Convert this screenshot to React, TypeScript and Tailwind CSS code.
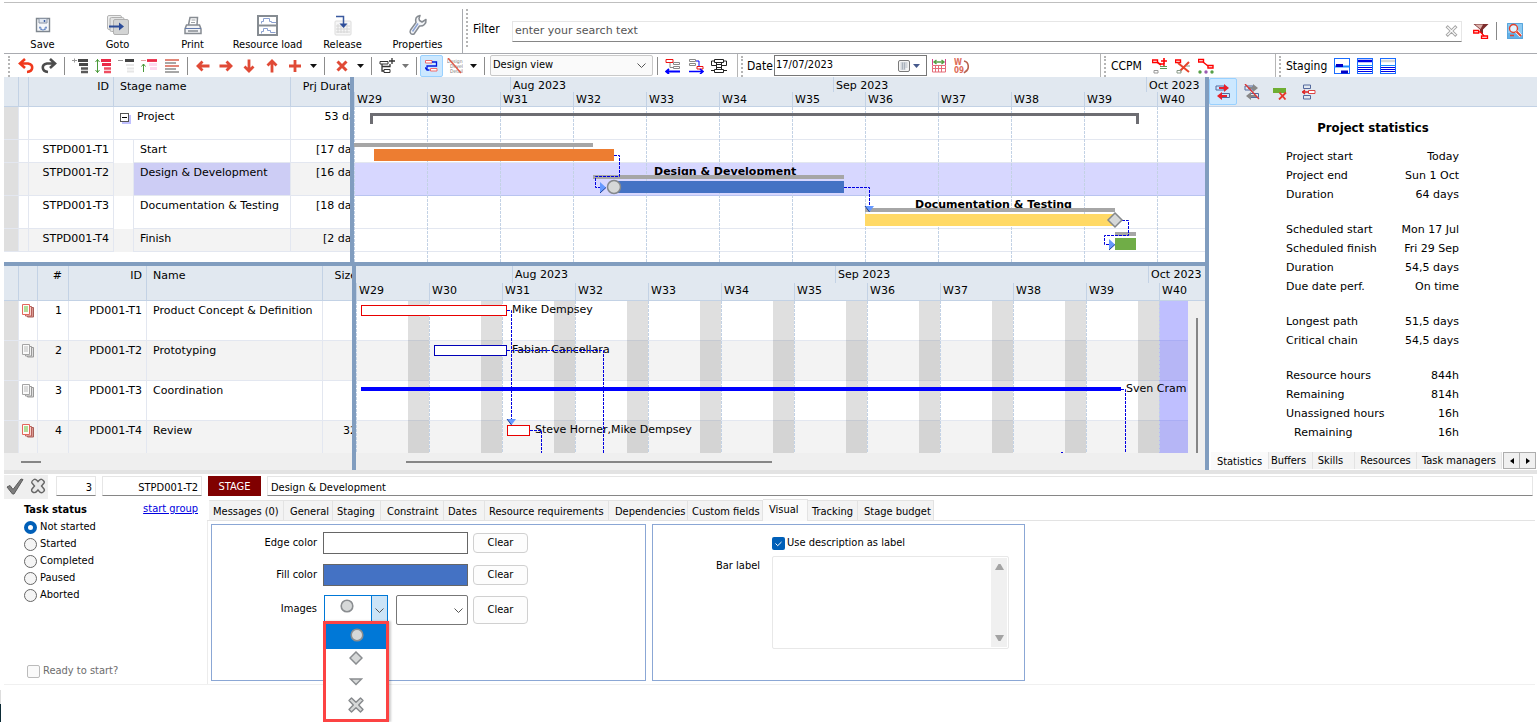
import React from 'react';

type Kids = { children?: React.ReactNode };

const Ico = ({ children, w = 16, h = 16, box }: Kids & { w?: number; h?: number; box?: string }) => (
  <svg width={w} height={h} viewBox={box ?? `0 0 ${w} ${h}`} fill="none" aria-hidden="true" className="shrink-0">
    {children}
  </svg>
);

const BigButton = ({ label, children }: Kids & { label: string }) => (
  <button className="flex w-[75px] flex-col items-center pt-2.5">
    <span className="flex h-6 items-center justify-center">{children}</span>
    <span className="whitespace-nowrap leading-4">{label}</span>
  </button>
);

const Tool = ({ label, active, children }: Kids & { label: string; active?: boolean }) => (
  <button
    aria-label={label}
    className={
      active
        ? 'flex h-[22px] w-[23px] items-center justify-center rounded-xs border border-[#99d1ff] bg-[#cce8ff]'
        : 'flex h-[22px] w-[23px] items-center justify-center'
    }
  >
    {children}
  </button>
);

const Caret = ({ label, muted }: { label: string; muted?: boolean }) => (
  <button aria-label={label} className="flex h-[22px] w-[14px] items-center justify-center">
    <Ico w={7} h={4}><path d="M0 0h7L3.500 4z" fill={muted ? '#777' : '#111'} /></Ico>
  </button>
);

const Sep = () => (
  <span className="flex w-2 justify-center"><span className="h-[18px] w-px bg-[#8c8c8c]" /></span>
);

const Grip = () => <span className="h-full w-px border-l-2 border-dotted border-[#b5b5b5]" />;

const RedArrow = ({ turn }: { turn: number }) => (
  <Ico><path transform={`rotate(${turn} 8 8)`} d="M14.500 8H3.500M7.500 3.500L3 8 7.500 12.500" stroke="#e04a36" strokeWidth="2.800" /></Ico>
);

const Outline = ({ a, b }: { a: string; b: string }) => (
  <>
    <path d="M6 2.500h10M7 6.500h9" stroke={a} strokeWidth="2.800" />
    <path d="M9 10.500h7M9 14h7" stroke={b} strokeWidth="2.500" />
  </>
);

const Circle = ({ size = 14 }: { size?: number }) => (
  <Ico w={size} h={size} box="0 0 14 14"><circle cx="7" cy="7" r="5.800" fill="#d6d8d8" stroke="#8a8d90" strokeWidth="1.600" /></Ico>
);
const Diamond = () => (
  <Ico w={14} h={14}><path d="M7 1l6 6-6 6-6-6z" fill="#d6d8d8" stroke="#8a8d90" strokeWidth="1.500" /></Ico>
);
const Triangle = () => (
  <Ico w={14} h={14}><path d="M1.500 4h11L7 9.500z" fill="#d6d8d8" stroke="#8a8d90" strokeWidth="1.400" /></Ico>
);
const Cross = () => (
  <Ico w={16} h={16}>
    <path d="M3.500 1L8 5.300 12.500 1 15 3.500 10.700 8 15 12.500 12.500 15 8 10.700 3.500 15 1 12.500 5.300 8 1 3.500z" fill="#d6d8d8" stroke="#85888b" strokeWidth="1.400" strokeLinejoin="round" />
  </Ico>
);

const DocStack = ({ plain }: { plain?: boolean }) => (
  <Ico w={13} h={14}>
    <path d="M5.500 3.500h6v9.500h-6z" fill={plain ? '#dcdcdc' : '#d99a92'} stroke={plain ? '#999' : '#a8605a'} />
    <path d="M3.500 2.500h6v9.500h-6z" fill={plain ? '#f2f2f2' : '#f8d4cf'} stroke={plain ? '#999' : '#b8605a'} />
    <path d="M.5.500h7v10h-7z" fill={plain ? '#fafafa' : '#fffaf5'} stroke={plain ? '#a5a5a5' : '#e2675c'} />
    <path d="M2 3h4M2 5h4M2 7h4" stroke={plain ? '#bbb' : '#5cc03a'} />
  </Ico>
);

function MainBar() {
  return (
    <header className="flex h-[52px] border-y border-t-[#bfbfbf] border-b-[#a9abb0]">
      <div className="flex pl-px">
        <BigButton label="Save">
          <Ico>
            <path d="M1.500 1.500h13v13h-13z" fill="#f5f7fa" stroke="#7f878f" strokeWidth="1.400" />
            <path d="M4 1.500h8v4.500H4z" fill="#dfe6f0" stroke="#8a94a3" />
            <path d="M9.500 3v2" stroke="#3b5fa5" strokeWidth="1.500" />
            <path d="M4.500 10a3.500 3 0 007 0M5 9.500l1.500 2M11 9.500l-1.500 2" stroke="#5b7fc0" />
          </Ico>
        </BigButton>
        <BigButton label="Goto">
          <Ico w={22} h={20}>
            <rect x=".5" y=".5" width="14" height="14" rx="1.500" fill="#eceded" stroke="#b5b5b5" />
            <rect x="3" y="2.500" width="14" height="14" rx="1.500" fill="#e2e3e3" stroke="#b0b0b0" />
            <rect x="6.500" y="4.500" width="15" height="15" rx="1.500" fill="#d3d4d4" stroke="#b0b0b0" />
            <path d="M2 11.500h12" stroke="#2c4c98" strokeWidth="2" />
            <path d="M12 7.500l5 4-5 4z" fill="#2c4c98" />
          </Ico>
        </BigButton>
        <BigButton label="Print">
          <Ico w={18} h={19}>
            <path d="M4.500 9L6 1.500h7.500L13 9" fill="#fff" stroke="#878c92" strokeWidth="1.500" />
            <path d="M7.500 4h4M7 6.500h4" stroke="#a0a4a8" />
            <path d="M2.500 9h13l1.500 4v4.500H1V13z" fill="#f2f3f5" stroke="#878c92" strokeWidth="1.500" />
            <path d="M1 12.500h16" stroke="#6179ad" />
            <path d="M4 15h10" stroke="#878c92" strokeWidth="1.500" />
          </Ico>
        </BigButton>
        <BigButton label="Resource load">
          <Ico w={21} h={21}>
            <rect x="1" y="1" width="19" height="19" fill="#fff" stroke="#868c92" strokeWidth="2" />
            <path d="M0 10.500h21" stroke="#868c92" strokeWidth="2" />
            <path d="M4.500 8.500v-2h2v-3h6v3h2v1h4.500M4.500 18.500v-2h2v-3h4v2h3v2h5" stroke="#8aa0d0" />
          </Ico>
        </BigButton>
        <BigButton label="Release">
          <Ico w={18} h={21}>
            <rect x="1" y="6" width="16" height="14" rx="1" fill="#f6f6f6" stroke="#dcdcdc" />
            <path d="M4 9v9M7 9v9M10 9v9M13 9v9M2 11h14M2 14h14M2 17h14" stroke="#d6d6d6" />
            <path d="M2 1.500h7.500V9" stroke="#3a599f" strokeWidth="1.500" />
            <path d="M5.500 8.500l4 4.500 4-4.500z" fill="#2c4c98" />
          </Ico>
        </BigButton>
        <BigButton label="Properties">
          <Ico w={20} h={22}>
            <path d="M12 1.500C8 2 7 5 8 8.500L2.500 16c-1.500 3 1 5 3.500 4l5.500-8c4 .5 7-2.500 6.500-6.500l-4 2.500-2.500-1.500-.5-2z" fill="#f3f5f8" stroke="#868b91" strokeWidth="1.500" strokeLinejoin="round" />
            <path d="M10 9.500L4.500 17.500" stroke="#8ba2d2" strokeWidth="1.500" />
          </Ico>
        </BigButton>
      </div>
      <div className="ml-[7px] mt-1.5 w-px bg-[#a9abb0]" />
      <div className="ml-[3px] flex py-1.5"><Grip /></div>
      <div className="flex min-w-0 flex-1 items-center pl-[5px] pr-3.5 pt-1.5">
        <label htmlFor="filter" className="mr-[7px] w-8 pb-1 text-[12px]">Filter</label>
        <div className="flex h-[21px] min-w-0 flex-1 items-center border border-[#e6e6e6] border-b-[#868686]">
          <input id="filter" placeholder="enter your search text" className="min-w-0 flex-1 px-0.5 font-['DejaVu_Sans',sans-serif] outline-none placeholder:text-[#555]" />
          <button aria-label="Clear filter" className="px-[3px]">
            <Ico w={13} h={12} box="0 0 16 16"><path d="M3 1l5 5 5-5 2 2-5 5 5 5-2 2-5-5-5 5-2-2 5-5-5-5z" fill="#fff" stroke="#a5a5a5" strokeWidth="1.400" /></Ico>
          </button>
        </div>
        <button aria-label="Edit filter" className="ml-[11px]">
          <Ico>
            <path d="M.5 1h15L10 6.500v5L7 9V6.500z" fill="#7d2c2c" />
            <path d="M2 1.500h8L7.500 6z" fill="#dcb4ae" />
            <path d="M.7 7.500h5v2.500h-5zM8.500 13h6v2.300h-6z" fill="#fff" stroke="#f00" strokeWidth="1.300" />
            <path d="M5.700 8.800h1.500l4 4.200" stroke="#f00" strokeWidth="1.200" />
          </Ico>
        </button>
        <span className="ml-[7px] h-[18px] w-px bg-[#888]" />
        <button aria-label="Search" className="ml-[10px]">
          <Ico>
            <rect width="16" height="16" fill="#8ccaf2" />
            <path d="M0 10h16v6H0z" fill="#62b1e8" />
            <path d="M.5.500h15v15H.5z" stroke="#5aa6dc" />
            <circle cx="6.500" cy="5.500" r="4" fill="#e3f4ff" stroke="#e0432f" strokeWidth="1.400" />
            <path d="M9.500 8.500l4.500 4.500" stroke="#fff" strokeWidth="3.500" />
            <path d="M9.500 8.500l4.500 4.500" stroke="#e0432f" strokeWidth="2" />
            <path d="M3 12.500h4" stroke="#e0432f" strokeWidth="1.500" />
          </Ico>
        </button>
      </div>
    </header>
  );
}

function ToolBar() {
  return (
    <div className="flex h-[23px] items-center">
      <div className="flex h-full w-[10px] items-center pl-1 pt-0.5"><Grip /></div>
      <Tool label="Undo"><Ico><path d="M7 1L2 5.500 7 10M2.500 5.500H10c6 1 5.500 8-1 8.500" stroke="#f0391c" strokeWidth="2.600" /></Ico></Tool>
      <Tool label="Redo"><Ico><path d="M9 1l5 4.500L9 10M13.500 5.500H6C0 6.500.5 13.500 7 14" stroke="#4c4c4c" strokeWidth="2.600" /></Ico></Tool>
      <Sep />
      <Tool label="Indent all"><Ico><Outline a="#484848" b="#5a5a5a" /><path d="M0 2.500h5M2.500.500v4" stroke="#999" /></Ico></Tool>
      <Tool label="Expand all"><Ico><Outline a="#ea2a47" b="#ee4e62" /><path d="M2.500 1v14M.5 4l2-2.500 2 2.500M.5 12l2 2.500 2-2.500" stroke="#4a9a3a" /></Ico></Tool>
      <Tool label="Collapse"><Ico><path d="M7 2.500h9" stroke="#444" strokeWidth="3" /><path d="M8 7h8M9 10.500h7M9 13.500h7" stroke="#e6e6e6" strokeWidth="2" /><path d="M0 2.500h5" stroke="#999" /></Ico></Tool>
      <Tool label="Move up"><Ico><path d="M6 2.500h10" stroke="#ea2a47" strokeWidth="2.800" /><path d="M8 6.500h8M9 10.500h7" stroke="#ffd7f0" strokeWidth="3" /><path d="M2.500 14V6M.5 8.500l2-2.500 2 2.500" stroke="#4a9a3a" /><path d="M0 2.500h5" stroke="#e8a0a0" /></Ico></Tool>
      <Tool label="Align"><Ico><path d="M1 2h14M1 8h14" stroke="#d9604e" strokeWidth="1.500" /><path d="M1 5h11M1 11h11M1 14h14" stroke="#8b8b8b" strokeWidth="1.500" /></Ico></Tool>
      <Sep />
      <Tool label="Left"><RedArrow turn={0} /></Tool>
      <Tool label="Right"><RedArrow turn={180} /></Tool>
      <Tool label="Down"><RedArrow turn={270} /></Tool>
      <Tool label="Up"><RedArrow turn={90} /></Tool>
      <Tool label="Add"><Ico><path d="M8 2v12M2 8h12" stroke="#e04a36" strokeWidth="2.800" /></Ico></Tool>
      <Caret label="Add options" />
      <Sep />
      <span className="w-0.5" />
      <Tool label="Delete"><Ico><path d="M3.500 3.500l9 9M12.500 3.500l-9 9" stroke="#e04a36" strokeWidth="3" /></Ico></Tool>
      <Caret label="Delete options" />
      <Sep />
      <Tool label="Link">
        <Ico>
          <path d="M1 3.500h8v2.500H1zM5 11.500h6v3H5z" stroke="#333" />
          <path d="M3 6v2.500h8V6M3 8.500v4.500h2M13 0v6M10 3h6" stroke="#333" strokeWidth="1.300" />
        </Ico>
      </Tool>
      <Caret label="Link options" muted />
      <Sep />
      <Tool label="Show links" active>
        <Ico w={13} h={12}>
          <path d="M.5.500h6.500v2.500H.500zM5.500 8.500h6.500v2.500H5.500z" fill="#fff" stroke="#f06a6a" />
          <path d="M7 2h4.500v4H2v4M0 7.500l2 2.500h2.500" stroke="#0019e0" strokeWidth="1.300" />
        </Ico>
      </Tool>
      <Tool label="Hide labels">
        <Ico>
          <text x="0" y="4.500" fontSize="5" fill="#777">Design</text>
          <text x="3" y="9.500" fontSize="5" fill="#777">Devel</text>
          <text x="3" y="15" fontSize="5" fill="#777">Detail</text>
          <path d="M1 0l13 15" stroke="#e05a48" strokeWidth="1.500" />
        </Ico>
      </Tool>
      <Caret label="Label options" />
      <Sep />
      <select aria-label="View" className="ml-0.5 h-[21px] w-[163px] appearance-none rounded-xs border border-[#c9c9c9] bg-[#fafafa] px-0.5">
        <option>Design view</option>
      </select>
      <span className="pointer-events-none -ml-4 flex w-4"><Ico w={9} h={5}><path d="M.5.500l4 4 4-4" stroke="#555" /></Ico></span>
      <Sep />
      <Tool label="Move earlier"><Ico><path d="M1 1.500h7v3H1z" stroke="#e11" /><path d="M8.500 4.500h6v2h-6zM8.500 8.500h6v2h-6z" stroke="#888" /><path d="M5 5v4.500h3" stroke="#888" /><path d="M1 13.500h14M4 11l-3 2.500L4 16" stroke="#00f" strokeWidth="1.800" /></Ico></Tool>
      <Tool label="Move later"><Ico><path d="M1.500 1.500h6v2h-6zM1.500 5.500h6v2h-6z" stroke="#888" /><path d="M8 3h3v6" stroke="#00f" /><path d="M9 8.500h6v2.500H9z" stroke="#e11" /><path d="M1 13.500h14M12 11l3 2.500L12 16" stroke="#00f" strokeWidth="1.600" /></Ico></Tool>
      <Tool label="Fit"><Ico><path d="M3.500 1.500h9v3h-9zM3.500 11.500h9v3h-9zM5.500 6.500h5v3h-5zM3 3H.500v4.500h5M13 3h2.500v4.500h-5M0 12.500h3.500M12.500 12.500H16M5.500 4.500v7M10.500 4.500v7" stroke="#222" /></Ico></Tool>
      <span className="ml-[7px] h-full w-px bg-[#b5b5b5]" />
      <span className="ml-[3px] flex h-full pt-0.5"><Grip /></span>
      <label htmlFor="date" className="ml-1 w-[27px] text-[12px]">Date</label>
      <div className="flex h-[21px] w-[153px] items-center border border-[#777]">
        <input id="date" defaultValue="17/07/2023" className="min-w-0 flex-1 px-px outline-none" />
        <button aria-label="Pick date" className="flex items-center gap-[3px] pr-[6px]">
          <Ico w={12} h={12}><rect x=".5" y=".5" width="11" height="11" rx="1.500" fill="#f5f5f5" stroke="#7a7a7a" /><path d="M2.500 3h7M2.500 5h7M2.500 7h7M2.500 9h5M4.500 2.500v7M6.500 2.500v7" stroke="#a0a8b4" strokeWidth=".8" /></Ico>
          <Ico w={7} h={4}><path d="M0 0h7L3.500 4z" fill="#45598c" /></Ico>
        </button>
      </div>
      <Tool label="Stretch calendar"><Ico w={14} h={14}><path d="M.5 0v6M13.500 0v6" stroke="#d8418a" /><path d="M2 3h10M4.500 1L2 3l2.500 2M9.500 1L12 3 9.500 5" stroke="#56a046" strokeWidth="1.400" /><path d="M.5 6.500h13v6.500H.500zM0 9.500h14M3.500 6v7M6.500 6v7M9.500 6v7" stroke="#e56c78" /></Ico></Tool>
      <Tool label="Week numbers">
        <Ico>
          <text x="0" y="6.500" fontSize="8" fontWeight="bold" fill="#dd6c58">W</text>
          <text x="0" y="15" fontSize="8" fontWeight="bold" fill="#dd6c58">09</text>
          <path d="M10 3c5 1 6 8 1 11M14 11l-4 4" stroke="#b8604e" strokeWidth="1.600" />
        </Ico>
      </Tool>
      <span className="ml-[127px] h-full w-px bg-[#b5b5b5]" />
      <span className="ml-[3px] flex h-full pt-0.5"><Grip /></span>
      <span className="ml-[5px] w-[37px] text-[12px]">CCPM</span>
      <Tool label="Add buffer"><Ico><path d="M.5 2h5v2.500h-5zM8 6h4v3" stroke="#f00" strokeWidth="1.400" /><path d="M5 4l4 3M12 0v6M9 3h6" stroke="#f00" strokeWidth="1.600" /><path d="M8 8.500h7M8 10.500h7" stroke="#5a9a55" /><path d="M2 12.500h4v2.500H2z" stroke="#999" /></Ico></Tool>
      <Tool label="Remove buffer"><Ico><path d="M.5 2h5v2.500h-5z" stroke="#f00" strokeWidth="1.400" /><path d="M3 5l11 9M14 4L5 13" stroke="#e8432a" strokeWidth="2" /><path d="M2 12.500h4v2.500H2zM11 8h4" stroke="#889988" /></Ico></Tool>
      <Tool label="Buffer chain"><Ico><path d="M.5 1.500h5V4h-5zM10 7.500h5V10h-5z" stroke="#f00" strokeWidth="1.400" /><path d="M5 4l5 4" stroke="#f00" strokeWidth="1.500" /><circle cx="2" cy="14" r="1.700" fill="#56a046" /><circle cx="8" cy="14" r="1.700" fill="#9b59b0" /><circle cx="14" cy="14" r="1.700" fill="#56a046" /></Ico></Tool>
      <span className="ml-[58px] h-full w-px bg-[#b5b5b5]" />
      <span className="ml-[3px] flex h-full pt-0.5"><Grip /></span>
      <span className="ml-[5px] w-11 text-[12px]">Staging</span>
      <Tool label="Staging offset"><Ico><rect x=".5" y=".5" width="15" height="15" fill="#fff" stroke="#1a6cff" /><path d="M0 8.500h16" stroke="#1a8cff" strokeWidth="2" /><path d="M2 7.500h7M7 14h7" stroke="#0000c8" strokeWidth="3" /></Ico></Tool>
      <Tool label="Staging rows"><Ico><rect x=".5" y=".5" width="15" height="15" fill="#fff" stroke="#1a6cff" /><path d="M0 7.500h16" stroke="#1a8cff" /><path d="M1 3h14" stroke="#0000e8" strokeWidth="2.500" /><path d="M1 9.500h14M1 11.500h14M1 13.500h14" stroke="#0000e8" /></Ico></Tool>
      <Tool label="Staging muted"><Ico><rect x=".5" y=".5" width="15" height="15" fill="#fff" stroke="#1a6cff" /><path d="M0 7.500h16" stroke="#1a8cff" /><path d="M1 3h14" stroke="#d5d5d5" strokeWidth="2.500" /><path d="M1 9.500h14M1 11.500h14M1 13.500h14" stroke="#0000e8" /></Ico></Tool>
    </div>
  );
}

const weeks = ['W29', 'W30', 'W31', 'W32', 'W33', 'W34', 'W35', 'W36', 'W37', 'W38', 'W39', 'W40'];

const Timeline = ({ tall }: { tall?: boolean }) => (
  <div className={`flex flex-col overflow-hidden border-b border-[#c3d2e5] bg-[#e1e8f0] ${tall ? 'h-[35px]' : 'h-[30px]'}`}>
    <div className={tall ? 'flex h-[17px] leading-[18px]' : 'flex h-[15px] leading-[18px]'}>
      <span className="w-[156px] shrink-0" />
      <span className="w-[323px] shrink-0 border-l border-[#c3d2e5] pl-0.5">Aug 2023</span>
      <span className="w-[313px] shrink-0 border-l border-[#c3d2e5] pl-0.5">Sep 2023</span>
      <span className="shrink-0 whitespace-nowrap border-l border-[#c3d2e5] pl-0.5">Oct 2023</span>
    </div>
    <div className="flex flex-1 leading-4">
      {weeks.map((w) => (
        <span key={w} className="w-[73px] shrink-0 border-l border-[#c3d2e5] pl-0.5">{w}</span>
      ))}
    </div>
  </div>
);

const gridX = weeks.map((_, i) => i * 73 + 0.5);
const link = { stroke: '#0000e0', strokeDasharray: '3 1', fill: 'none' };

function StageChart() {
  return (
    <svg className="block h-[155px] w-full" fill="#000">
      <rect y="56" width="100%" height="33" fill="#d7d7ff" />
      {[32.5, 55.5, 121.5, 144.5].map((y) => <line key={y} x1="0" x2="100%" y1={y} y2={y} stroke="#e3e7f0" />)}
      <line x1="0" x2="100%" y1="88.500" y2="88.500" stroke="#b9c4f0" />
      {gridX.map((x) => <line key={x} x1={x} x2={x} y1="0" y2="155" stroke="#c3d2e5" strokeDasharray="3 1" />)}
      <path d="M16 6h769v11h-3V9H19v8h-3z" fill="#6d6d72" />
      <text x="300" y="68" fontWeight="bold">Design &amp; Development</text>
      <text x="561" y="101" fontWeight="bold">Documentation &amp; Testing</text>
      <rect x="239" y="68" width="251" height="4" fill="#a6a6a6" />
      <rect x="300" y="72" width="144" height="2" fill="#d7d7ff" />
      <rect x="511" y="101" width="250" height="4" fill="#a6a6a6" />
      <rect x="561" y="105" width="162" height="2" fill="#fff" />
      <rect x="0" y="36" width="239" height="4" fill="#a6a6a6" />
      <rect x="761" y="125" width="21" height="4" fill="#a6a6a6" />
      <rect x="20" y="42" width="240" height="12" fill="#ed7d31" />
      <rect x="260" y="74" width="230" height="12" fill="#4472c4" />
      <rect x="511" y="107" width="250" height="12" fill="#ffd966" />
      <rect x="761" y="131" width="21" height="12" fill="#70ad47" />
      <path d="M260 48.500h5.500v21h-24v11h5" {...link} />
      <path d="M490 80.500h25.500V100" {...link} />
      <path d="M768 113.500h6.500v15h-24v9h5" {...link} />
      <path d="M246 75l6 5.500-6 5.500zM511 99h9l-4.500 6zM755 132l6 5.500-6 5.500z" fill="#6699ff" />
      <path d="M252 80.500l-6 5.500M511 99l4.500 6M761 137.500l-6 5.500" stroke="#1c3f99" />
      <circle cx="260" cy="80" r="6.500" fill="#d6d8d8" stroke="#85888b" strokeWidth="1.500" />
      <path d="M761 106l7 7-7 7-7-7z" fill="#d6d8d8" stroke="#85888b" strokeWidth="1.500" />
    </svg>
  );
}

function TaskChart() {
  return (
    <svg className="block h-[152px] w-full" fill="#000">
      <rect y="40" width="100%" height="40" fill="#f3f3f3" />
      <rect y="120" width="100%" height="40" fill="#f3f3f3" />
      {[39.5, 79.5, 119.5].map((y) => <line key={y} x1="0" x2="100%" y1={y} y2={y} stroke="#e3e7f0" />)}
      {gridX.slice(0, 11).map((x) => <rect key={x} x={x + 51.5} width="21" height="152" fill="#000" fillOpacity=".125" />)}
      <rect x="803" width="60" height="152" fill="#0000ff" fillOpacity=".25" />
      {gridX.map((x) => <line key={x} x1={x} x2={x} y1="0" y2="152" stroke="#c3d2e5" strokeDasharray="3 1" />)}
      <rect x="5.500" y="4.500" width="145" height="10" fill="#fff" stroke="#e80000" />
      <rect x="78.500" y="44.500" width="72" height="10" fill="#fff" stroke="#0000b8" />
      <rect x="5" y="86" width="760" height="4" fill="#0000ff" />
      <rect x="151.500" y="124.500" width="22" height="10" fill="#fff" stroke="#e80000" />
      <text x="156" y="12">Mike Dempsey</text>
      <text x="156" y="52">Fabian Cancellara</text>
      <text x="770" y="91">Sven Cram</text>
      <text x="179" y="132">Steve Horner,Mike Dempsey</text>
      <path d="M151 9.500h4.500V119M151 49.500h96.500V152M765 88.500h4.500V152M174 129.500h11.500V152M705 151.500h2" {...link} />
      <path d="M151 118h9l-4.500 6z" fill="#6699ff" />
      <path d="M151 118l4.500 6" stroke="#1c3f99" />
    </svg>
  );
}

const stages = [
  { id: '', name: 'Project', dur: '53 days', h: 'h-[33px]', bg: 'bg-white' },
  { id: 'STPD001-T1', name: 'Start', dur: '[17 days]', h: 'h-[23px]', bg: 'bg-white' },
  { id: 'STPD001-T2', name: 'Design & Development', dur: '[16 days]', h: 'h-[33px]', bg: 'bg-[#f3f3f3]' },
  { id: 'STPD001-T3', name: 'Documentation & Testing', dur: '[18 days]', h: 'h-[33px]', bg: 'bg-white' },
  { id: 'STPD001-T4', name: 'Finish', dur: '[2 days]', h: 'h-[23px]', bg: 'bg-[#f3f3f3]' },
];

const th = 'border-b border-r border-[#c3d2e5] p-0 align-top font-normal';
const td = 'border-b border-r border-[#e3e7f0] p-0 align-top';

function StageTable() {
  return (
    <table className="w-[369px] table-fixed border-separate border-spacing-0 leading-5">
      <colgroup>
        <col className="w-[15px]" /><col className="w-[10px]" /><col className="w-[85px]" /><col className="w-[20px]" /><col className="w-[157px]" /><col />
      </colgroup>
      <thead>
        <tr className="h-[30px] bg-[#e1e8f0]">
          <th className={th} /><th className={th} />
          <th className={`${th} pr-1 text-right`}>ID</th>
          <th colSpan={2} className={`${th} pl-1.5 text-left`}>Stage name</th>
          <th className={`${th} whitespace-nowrap pr-1 text-right`}>Prj Duration</th>
        </tr>
      </thead>
      <tbody>
        {stages.map((s, i) => (
          <tr key={s.name} className={`${s.h} ${s.bg}`}>
            <td className={`${td} bg-[#dfdfdf]`} />
            <td className={td} />
            <td className={`${td} whitespace-nowrap pr-1 text-right`}>{s.id}</td>
            {i === 0 ? (
              <td colSpan={2} className={`${td} pl-1.5`}>
                <span className="flex items-center gap-2">
                  <button aria-label="Collapse project" className="flex size-[9px] items-center justify-center border border-[#555] bg-white shadow-[2px_2px_0_#c0c0ff]">
                    <span className="h-px w-[5px] bg-black" />
                  </button>
                  {s.name}
                </span>
              </td>
            ) : (
              <>
                <td className="border-r border-[#e3e7f0] p-0" />
                <td className={`${td} whitespace-nowrap pl-1.5 ${i === 2 ? 'bg-[#cdcdf5]' : ''}`}>{s.name}</td>
              </>
            )}
            <td className={`${td} whitespace-nowrap pr-1 text-right`}>{s.dur}</td>
          </tr>
        ))}
      </tbody>
    </table>
  );
}

const tasks = [
  { n: 1, name: 'Product Concept & Definition', size: '' },
  { n: 2, name: 'Prototyping', size: '' },
  { n: 3, name: 'Coordination', size: '' },
  { n: 4, name: 'Review', size: '32' },
];

function TaskTable() {
  return (
    <table className="w-[358px] table-fixed border-separate border-spacing-0 leading-5">
      <colgroup>
        <col className="w-[15px]" /><col className="w-[19px]" /><col className="w-[31px]" /><col className="w-[78px]" /><col className="w-[176px]" /><col />
      </colgroup>
      <thead>
        <tr className="h-[35px] bg-[#e1e8f0]">
          <th className={th} /><th className={th} />
          <th className={`${th} pr-1.5 text-right`}>#</th>
          <th className={`${th} pr-1 text-right`}>ID</th>
          <th className={`${th} pl-1.5 text-left`}>Name</th>
          <th className={`${th} pr-1 text-right`}>Size</th>
        </tr>
      </thead>
      <tbody>
        {tasks.map((t) => (
          <tr key={t.n} className={t.n % 2 ? 'h-10 bg-white' : 'h-10 bg-[#f3f3f3]'}>
            <td className={`${td} bg-[#dfdfdf]`} />
            <td className={`${td} pl-[3px] pt-[3px]`}><span className="flex"><DocStack plain={t.n === 2 || t.n === 3} /></span></td>
            <td className={`${td} pr-1.5 text-right`}>{t.n}</td>
            <td className={`${td} pr-1 text-right`}>{`PD001-T${t.n}`}</td>
            <td className={`${td} whitespace-nowrap pl-1.5`}>{t.name}</td>
            <td className={`${td} pr-1 text-right`}>{t.size}</td>
          </tr>
        ))}
      </tbody>
    </table>
  );
}

const stats = [
  [['Project start', 'Today'], ['Project end', 'Sun 1 Oct'], ['Duration', '64 days']],
  [['Scheduled start', 'Mon 17 Jul'], ['Scheduled finish', 'Fri 29 Sep'], ['Duration', '54,5 days'], ['Due date perf.', 'On time']],
  [['Longest path', '51,5 days'], ['Critical chain', '54,5 days']],
  [['Resource hours', '844h'], ['Remaining', '814h'], ['Unassigned hours', '16h'], ['Remaining', '16h']],
];

function StatsPanel() {
  return (
    <aside className="flex w-[328px] shrink-0 flex-col">
      <div className="flex h-[30px] border-b border-[#c3d2e5] bg-[#e1e8f0]">
        <button aria-label="Show links" className="mr-px mt-px flex h-[27px] w-7 items-center justify-center rounded-xs border border-[#99d1ff] bg-[#cce8ff]">
          <Ico><path d="M1 2h8v4H1zM6.500 9.500h8v4h-8z" stroke="#53689c" /><path d="M4 4h6M12 12H6" stroke="#e8202c" strokeWidth="2.200" /><path d="M9 0l5 4-5 4zM7 8l-5 4 5 4z" fill="#e8202c" /></Ico>
        </button>
        <button aria-label="Hide links" className="flex w-[27px] items-center justify-center">
          <Ico><path d="M1 2h8v4H1zM6.500 9.500h8v4h-8z" stroke="#53689c" /><path d="M4 4h6M12 12H6" stroke="#888" strokeWidth="2.200" /><path d="M9 0l5 4-5 4zM7 8l-5 4 5 4z" fill="#888" /><path d="M1 0l14 15" stroke="#d33" strokeWidth="1.300" /></Ico>
        </button>
        <button aria-label="Remove bar" className="flex w-[30px] items-center justify-center pt-1">
          <Ico w={14} h={12}><path d="M0 0h13v5H0z" fill="#6eae32" /><path d="M6.500 4.500l6 7M13 4.500l-7 7" stroke="#e8382c" strokeWidth="1.800" /></Ico>
        </button>
        <button aria-label="Group" className="flex w-[27px] items-center justify-center">
          <Ico w={14} h={16}><path d="M1.500 1h7v3.500h-7zM1.500 11.500h7v3.500h-7z" stroke="#53689c" /><path d="M6.500 6.500H13v3H6.500z" fill="#fff" stroke="#d44" /><path d="M0 8h7M3 6L.5 8 3 10" stroke="#d22" strokeWidth="1.300" /></Ico>
        </button>
      </div>
      <h2 className="mb-[10px] mt-3 text-center font-['DejaVu_Sans_Condensed',sans-serif] text-[13px] font-bold leading-[18px]">Project statistics</h2>
      <div className="mx-auto flex w-[174px] flex-1 flex-col gap-4 pr-px">
        {stats.map((g, i) => (
          <dl key={i}>
            {g.map(([k, v], j) => (
              <div key={j} className={`flex justify-between leading-[19px] ${i === 3 && j === 3 ? 'pl-2' : ''}`}><dt>{k}</dt><dd>{v}</dd></div>
            ))}
          </dl>
        ))}
      </div>
      <div role="tablist" className="flex h-[18px] items-start pl-0.5 font-['DejaVu_Sans_Condensed',sans-serif] leading-4">
        <button role="tab" aria-selected="true" className="h-[18px] w-[57px] bg-[#fafafa] pt-0.5">Statistics</button>
        <button role="tab" className="h-[17px] w-[45px] border-x border-[#e3e3e3] bg-[#f3f3f3] pr-1">Buffers</button>
        <button role="tab" className="h-[17px] w-[42px] border-r border-[#e3e3e3] bg-[#f3f3f3] pr-1.5">Skills</button>
        <button role="tab" className="h-[17px] w-[62px] border-r border-[#e3e3e3] bg-[#f3f3f3]">Resources</button>
        <button role="tab" className="h-[17px] w-[85px] whitespace-nowrap border-r border-[#e3e3e3] bg-[#f3f3f3]">Task managers</button>
        <button aria-label="Previous tabs" className="ml-px flex size-[17px] items-center justify-center border border-[#adadad] bg-[#f0f0f0]"><Ico w={4} h={6}><path d="M4 0v6L0 3z" fill="#000" /></Ico></button>
        <button aria-label="Next tabs" className="-ml-px flex size-[17px] items-center justify-center border border-[#adadad] bg-[#f0f0f0]"><Ico w={4} h={6}><path d="M0 0v6l4-3z" fill="#000" /></Ico></button>
      </div>
    </aside>
  );
}

const statuses = ['Not started', 'Started', 'Completed', 'Paused', 'Aborted'];

const tabs: [string, string][] = [
  ['Messages (0)', 'w-[75px] pl-1'], ['General', 'w-[49px] pl-1.5'], ['Staging', 'w-[48px] pl-1'], ['Constraint', 'w-[63px] pl-1.5'], ['Dates', 'w-[41px] pl-1'],
  ['Resource requirements', 'w-[124px] pl-1'], ['Dependencies', 'w-[79px] pl-1.5'], ['Custom fields', 'w-[75px] pl-1'], ['Visual', 'w-[45px] pl-1.5'], ['Tracking', 'w-[50px] pl-1'], ['Stage budget', 'w-[76px] pl-1.5'],
];

const field = 'h-5 border border-[#e6e6e6] border-b-[#868686] px-[3px] pt-0.5 outline-none';
const clear = 'ml-[5px] w-[55px] rounded border border-[#d0d0d0] bg-[#fdfdfd] pt-px';

function Editor() {
  return (
    <section className="flex flex-col">
      <div className="flex h-[25px] items-start">
        <div className="flex h-6 w-11 items-center justify-between bg-[#efefef] px-0.5 pb-0.5">
          <button aria-label="Accept"><Ico w={18} h={17}><path d="M1 9l3-1.500 3 4L15 1l2 .5L8 16H6.500z" fill="#7d7d7d" stroke="#5c5c5c" strokeLinejoin="round" /></Ico></button>
          <button aria-label="Cancel"><Ico><path d="M4 1.500c1.500-1 2.500 0 4 2 1.500-2 2.500-3 4-2s3 2 2 3.500L11.500 8l2.500 3c1 1.500 0 2.500-1.500 3.500S9.500 14 8 12c-1.500 2-3 3-4.500 2.500S1 12.500 2 11l2.500-3L2 5c-1-1.500.5-2.500 2-3.500z" fill="#e9e9e9" stroke="#666" strokeWidth="1.400" /></Ico></button>
        </div>
        <div className="flex min-w-0 flex-1 pt-px">
          <input aria-label="Number" defaultValue="3" className={`${field} ml-2 w-[40px] text-right`} />
          <input aria-label="Task ID" defaultValue="STPD001-T2" className={`${field} ml-[6px] w-[100px] text-right`} />
          <span className="ml-1.5 flex h-5 w-[53px] items-center justify-center bg-[#800000] pt-0.5 text-white">STAGE</span>
          <input aria-label="Description" defaultValue="Design & Development" className={`${field} ml-1.5 mr-1 min-w-0 flex-1`} />
        </div>
      </div>
      <div className="mr-0.5 flex border-b border-[#f0f0f0]">
        <fieldset className="flex w-[203px] flex-col pl-5">
          <div className="flex justify-between pr-[9px] leading-[18px]">
            <legend className="pt-px font-bold">Task status</legend>
            <a href="#group" className="text-[#0000e0] underline">start group</a>
          </div>
          {statuses.map((s, i) => (
            <label key={s} className="flex h-[17px] items-center gap-[3px]">
              <input type="radio" name="status" defaultChecked={i === 0} className="size-[13px] appearance-none rounded-full border border-[#666] bg-[#f5f5f5] checked:border-4 checked:border-[#005fb8] checked:bg-white" />
              {s}
            </label>
          ))}
          <label className="mt-[58px] flex items-center gap-[3px] pl-[3px] leading-[18px] text-[#6d6d6d]">
            <input type="checkbox" disabled className="size-[13px] appearance-none rounded-xs border border-[#bbb] bg-[#fafafa]" />
            Ready to start?
          </label>
        </fieldset>
        <div className="min-w-0 flex-1">
          <div role="tablist" className="flex h-[21px] items-end border-b border-[#e3e3e3] pl-0.5">
            {tabs.map(([t, w]) => (
              <button
                key={t}
                role="tab"
                aria-selected={t === 'Visual'}
                className={`whitespace-nowrap border-r border-t border-[#e3e3e3] text-left ${w} ${t === 'Visual' ? 'mb-[-1px] h-[22px] bg-[#fafafa]' : 'h-5 bg-[#f3f3f3] pt-[3px]'}`}
              >
                {t}
              </button>
            ))}
          </div>
          <div className="flex gap-1.5 border-l border-[#ececec] pb-[3px] pl-[3px] pt-[3px]">
            <div className="flex h-[157px] w-[435px] flex-col border border-[#8ba7d5] pt-[7px]">
              <div className="flex h-[22px] items-stretch">
                <label htmlFor="edge" className="mr-1.5 w-[105px] text-right leading-[22px]">Edge color</label>
                <button id="edge" aria-label="Edge color" className="w-[145px] border border-[#666] bg-white" />
                <button className={`${clear} my-px`}>Clear</button>
              </div>
              <div className="mt-[10px] flex h-[22px] items-stretch">
                <label htmlFor="fill" className="mr-1.5 w-[105px] text-right leading-[22px]">Fill color</label>
                <button id="fill" aria-label="Fill color" className="w-[145px] border border-[#666] bg-[#4472c4]" />
                <button className={`${clear} my-px`}>Clear</button>
              </div>
              <div className="mt-[9px] flex h-[30px] items-stretch">
                <label htmlFor="image" className="mr-[7px] w-[105px] text-right leading-7">Images</label>
                <div className="relative flex w-16">
                  <select id="image" className="w-full appearance-none border border-[#0078d7] bg-white" />
                  <span className="pointer-events-none absolute inset-y-0 left-0 flex w-[46px] items-center justify-center pb-2"><Circle /></span>
                  <span className="pointer-events-none absolute inset-y-0 right-0 flex w-[17px] items-center justify-center border border-[#0078d7] bg-[#cce4f7]"><Ico w={9} h={5}><path d="M.5.500l4 4 4-4" stroke="#555" /></Ico></span>
                  <div role="listbox" className="absolute -left-px top-[26px] flex w-[66px] flex-col border-[3px] border-[#fc4343] bg-white shadow-[2px_0_2px_#0003]">
                    <button role="option" aria-selected="true" aria-label="Circle" className="flex h-[25px] items-center justify-center bg-[#0078d7] pb-1 pl-0.5"><Circle /></button>
                    <button role="option" aria-label="Diamond" className="flex h-[17px] items-center justify-center"><Diamond /></button>
                    <button role="option" aria-label="Triangle" className="flex h-[31px] items-center justify-center"><Triangle /></button>
                    <button role="option" aria-label="Cross" className="flex h-[22px] items-start justify-center"><Cross /></button>
                  </div>
                </div>
                <select aria-label="End image" className="ml-2 w-[72px] appearance-none rounded-xs border border-[#777] bg-white" />
                <span className="pointer-events-none -ml-3.5 flex w-3.5 items-center"><Ico w={9} h={5}><path d="M.5.500l4 4 4-4" stroke="#555" /></Ico></span>
                <button className={`${clear} my-px`}>Clear</button>
              </div>
            </div>
            <div className="h-[157px] w-[373px] border border-[#8ba7d5] pt-[9px]">
              <label className="ml-[119px] flex h-[18px] items-center gap-0.5">
                <span className="relative flex size-[13px]">
                  <input type="checkbox" defaultChecked className="size-[13px] appearance-none rounded-xs bg-[#005fb8]" />
                  <svg className="pointer-events-none absolute inset-0" width="13" height="13" fill="none"><path d="M3.500 6.500l2.200 2.200L9.500 5" stroke="#fff" /></svg>
                </span>
                Use description as label
              </label>
              <div className="mt-1 flex">
                <label htmlFor="barlabel" className="mr-3 w-[107px] text-right leading-5">Bar label</label>
                <div className="flex h-[93px] w-[237px] rounded-xs border border-[#e8e8e8] p-px">
                  <textarea id="barlabel" className="min-w-0 flex-1 resize-none outline-none" />
                  <div className="flex w-4 flex-col items-center justify-between bg-[#f0f0f0] py-1.5">
                    <Ico w={9} h={6}><path d="M3.500 0h2L9 6H0z" fill="#a3a3a3" /></Ico>
                    <Ico w={9} h={6}><path d="M0 0h9L5.500 6h-2z" fill="#a3a3a3" /></Ico>
                  </div>
                </div>
              </div>
            </div>
          </div>
        </div>
      </div>
    </section>
  );
}

export default function App() {
  return (
    <div className="relative min-h-screen overflow-hidden bg-white pl-1 pt-0.5 font-['DejaVu_Sans_Condensed','DejaVu_Sans',sans-serif] text-[11px] text-black">
      <MainBar />
      <ToolBar />
      <main className="flex font-['DejaVu_Sans',sans-serif]">
        <div className="flex min-w-0 flex-1 flex-col">
          <div className="flex">
            <div className="w-[346px] shrink-0 overflow-hidden"><StageTable /></div>
            <div className="w-1 shrink-0 bg-[#819dbf]" />
            <div className="min-w-0 flex-1"><Timeline /><StageChart /></div>
          </div>
          <div className="h-1 bg-[#819dbf]" />
          <div className="flex">
            <div className="w-[348px] shrink-0">
              <div className="h-[187px] overflow-hidden"><TaskTable /></div>
              <div className="flex h-[17px] items-center bg-[#efefef] pl-[17px]"><span className="h-0.5 w-5 bg-[#868686]" /></div>
            </div>
            <div className="w-1 shrink-0 bg-[#819dbf]" />
            <div className="min-w-0 flex-1">
              <Timeline tall />
              <div className="flex">
                <div className="min-w-0 flex-1"><TaskChart /></div>
                <div className="flex w-[17px] justify-center bg-[#efefef] pt-[17px]"><span className="w-0.5 bg-[#868686]" /></div>
              </div>
              <div className="flex h-[17px] items-center bg-[#efefef] pl-[50px]"><span className="h-0.5 w-[366px] bg-[#868686]" /></div>
            </div>
          </div>
        </div>
        <div className="w-1 shrink-0 bg-[#819dbf]" />
        <StatsPanel />
      </main>
      <div className="h-[5px] border-b border-white bg-[#e3e3e3]" />
      <Editor />
      <div className="absolute bottom-0 left-0 h-8 w-px border-t-[14px] border-[#ddd] bg-[#0b2a35]" />
    </div>
  );
}
